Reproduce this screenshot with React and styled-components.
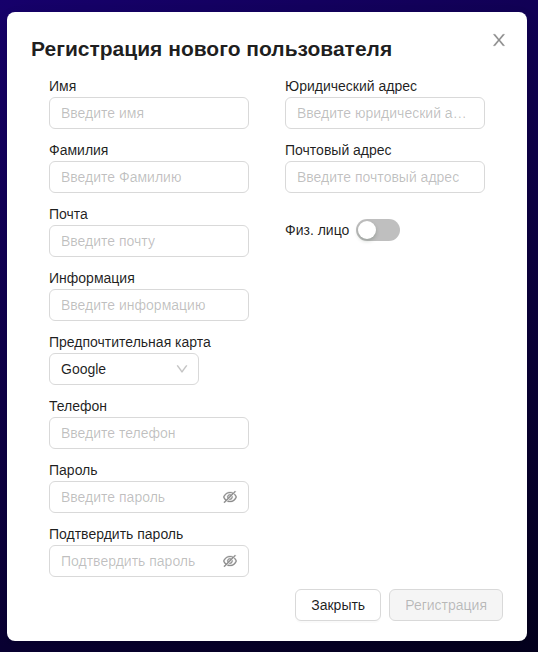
import React from 'react';
import styled, { createGlobalStyle } from 'styled-components';
import { AiOutlineDown, AiOutlineEyeInvisible } from 'react-icons/ai';

const GlobalStyle = createGlobalStyle`
  *, *::before, *::after { box-sizing: border-box; }
  body {
    margin: 0;
    font-family: "Liberation Sans", Arial, sans-serif;
    font-size: 14px;
    line-height: 22px;
    color: rgba(0, 0, 0, 0.88);
  }
  button, input { font: inherit; color: inherit; }
`;

const Backdrop = styled.div`
  height: 100vh;
  padding: 12px 11px 11px 7px;
  overflow: hidden;
  background: linear-gradient(155deg, #17006c 0%, #05001e 100%);
`;

const Modal = styled.section`
  position: relative;
  display: flex;
  flex-direction: column;
  width: 520px;
  height: 629px;
  padding: 20px 24px;
  border-radius: 8px;
  background: #fff;
  box-shadow: 0 6px 16px rgba(0, 0, 0, 0.08), 0 3px 6px -4px rgba(0, 0, 0, 0.12),
    0 9px 28px 8px rgba(0, 0, 0, 0.05);
`;

const Title = styled.h1`
  margin: 0 0 9px;
  height: 34px;
  font-size: 21px;
  line-height: 34px;
  font-weight: 700;
  white-space: nowrap;
`;

const CloseButton = styled.button`
  position: absolute;
  top: 17px;
  right: 17px;
  display: flex;
  align-items: center;
  justify-content: center;
  width: 22px;
  height: 22px;
  padding: 0;
  border: 0;
  background: transparent;
  color: rgba(0, 0, 0, 0.45);
`;

const Columns = styled.div`
  display: grid;
  grid-template-columns: 200px 200px;
  column-gap: 36px;
  padding-left: 18px;
`;

const Column = styled.div`
  display: flex;
  flex-direction: column;
  gap: 10px;
`;

const Field = styled.label`
  display: block;
`;

const Caption = styled.span`
  display: block;
  height: 22px;
  white-space: nowrap;
`;

const Control = styled.span`
  display: flex;
  align-items: center;
  gap: 4px;
  width: 200px;
  height: 32px;
  padding: 0 11px;
  border: 1px solid #d9d9d9;
  border-radius: 6px;
  background: #fff;
`;

const SelectControl = styled(Control)`
  width: 150px;
  padding-right: 10px;
`;

const Input = styled.input`
  flex: 1;
  min-width: 0;
  height: 22px;
  padding: 0;
  border: 0;
  outline: 0;
  background: transparent;
  text-overflow: ellipsis;
  &::placeholder {
    color: rgba(0, 0, 0, 0.25);
    opacity: 1;
    text-overflow: ellipsis;
  }
`;

const SelectValue = styled.span`
  flex: 1;
`;

const ArrowIcon = styled(AiOutlineDown)`
  width: 12px;
  height: 12px;
  color: #bfbfbf;
  stroke-width: 26;
`;

const EyeIcon = styled(AiOutlineEyeInvisible)`
  width: 14px;
  height: 14px;
  color: #8c8c8c;
  stroke-width: 18;
`;

const SwitchRow = styled.div`
  display: flex;
  align-items: center;
  gap: 7px;
  height: 22px;
  margin-top: 16px;
`;

const Switch = styled.button`
  display: flex;
  align-items: center;
  width: 44px;
  height: 22px;
  padding: 2px;
  border: 0;
  border-radius: 11px;
  background: rgba(0, 0, 0, 0.25);
`;

const Knob = styled.span`
  width: 18px;
  height: 18px;
  border-radius: 50%;
  background: #fff;
  box-shadow: 0 2px 4px rgba(0, 35, 11, 0.2);
`;

const Footer = styled.footer`
  display: flex;
  justify-content: flex-end;
  gap: 8px;
  margin-top: 12px;
`;

const Button = styled.button`
  height: 32px;
  padding: 4px 15px;
  border: 1px solid #d9d9d9;
  border-radius: 6px;
  background: #fff;
  color: rgba(0, 0, 0, 0.88);
  box-shadow: 0 2px 0 rgba(0, 0, 0, 0.02);
  &:disabled {
    background: rgba(0, 0, 0, 0.04);
    color: rgba(0, 0, 0, 0.25);
    box-shadow: none;
  }
`;

const CloseIcon = () => (
  <svg
    viewBox="64 64 896 896"
    width="16"
    height="16"
    fill="#8c8c8c"
    stroke="#8c8c8c"
    strokeWidth="14"
    aria-hidden="true"
  >
    <path d="M563.8 512l262.5-312.9c4.4-5.2.7-13.1-6.1-13.1h-79.8c-4.7 0-9.2 2.1-12.3 5.7L511.6 449.8 295.1 191.7c-3-3.6-7.5-5.7-12.3-5.7H203c-6.8 0-10.5 7.9-6.1 13.1L459.4 512 196.9 824.9A7.95 7.95 0 0 0 203 838h79.8c4.7 0 9.2-2.1 12.3-5.7l216.5-258.1 216.5 258.1c3 3.6 7.5 5.7 12.3 5.7h79.8c6.8 0 10.5-7.9 6.1-13.1L563.8 512z" />
  </svg>
);

const TextField = ({ label, placeholder, password }) => (
  <Field>
    <Caption>{label}</Caption>
    <Control>
      <Input type={password ? 'password' : 'text'} placeholder={placeholder} />
      {password && <EyeIcon viewBox="64 64 896 896" />}
    </Control>
  </Field>
);

export default function App() {
  return (
    <>
      <GlobalStyle />
      <Backdrop>
        <Modal role="dialog">
          <CloseButton aria-label="Закрыть">
            <CloseIcon />
          </CloseButton>
          <Title>Регистрация нового пользователя</Title>
          <Columns>
            <Column>
              <TextField label="Имя" placeholder="Введите имя" />
              <TextField label="Фамилия" placeholder="Введите Фамилию" />
              <TextField label="Почта" placeholder="Введите почту" />
              <TextField label="Информация" placeholder="Введите информацию" />
              <Field as="div">
                <Caption>Предпочтительная карта</Caption>
                <SelectControl role="combobox">
                  <SelectValue>Google</SelectValue>
                  <ArrowIcon viewBox="64 64 896 896" />
                </SelectControl>
              </Field>
              <TextField label="Телефон" placeholder="Введите телефон" />
              <TextField label="Пароль" placeholder="Введите пароль" password />
              <TextField label="Подтвердить пароль" placeholder="Подтвердить пароль" password />
            </Column>
            <Column>
              <TextField label="Юридический адрес" placeholder="Введите юридический адрес" />
              <TextField label="Почтовый адрес" placeholder="Введите почтовый адрес" />
              <SwitchRow>
                <span>Физ. лицо</span>
                <Switch role="switch" aria-checked="false" aria-label="Физ. лицо">
                  <Knob />
                </Switch>
              </SwitchRow>
            </Column>
          </Columns>
          <Footer>
            <Button>Закрыть</Button>
            <Button disabled>Регистрация</Button>
          </Footer>
        </Modal>
      </Backdrop>
    </>
  );
}
